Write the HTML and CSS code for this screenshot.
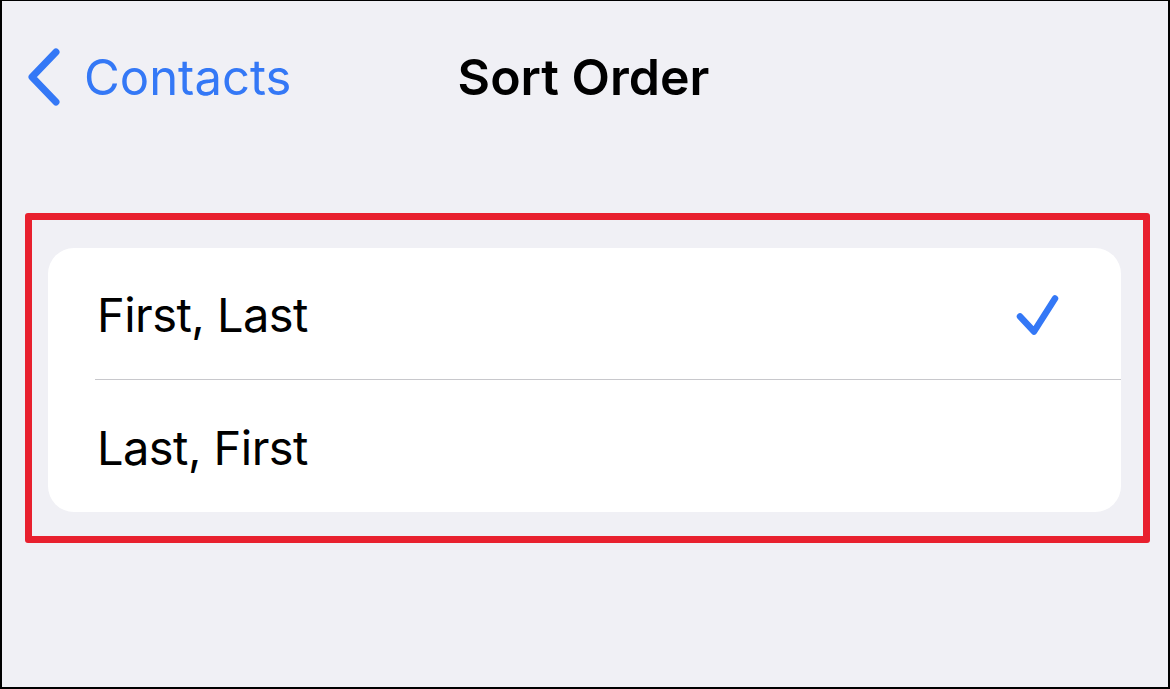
FILE: index.html
```html
<!DOCTYPE html>
<html lang="en">
<head>
  <meta charset="UTF-8">
  <meta name="viewport" content="width=device-width, initial-scale=1.0">
  <title>Sort Order</title>
  <link rel="stylesheet" href="styles.css">
</head>
<body>
  <div class="screen">
    <div class="navbar">
      <a class="back" href="#">
        <svg class="chevron" width="36" height="60" viewBox="0 0 36 60">
          <path d="M30 5 L6 30 L30 55" fill="none" stroke="#3478f6" stroke-width="7" stroke-linecap="round" stroke-linejoin="round"/>
        </svg>
        <span>Contacts</span>
      </a>
      <div class="title">Sort Order</div>
      <div></div>
    </div>

    <div class="highlight">
      <div class="card">
        <div class="row">
          <span class="label">First, Last</span>
          <svg class="check" width="46" height="46" viewBox="0 0 46 46">
            <path d="M5 25.5 L19 40.5 L40 7.5" fill="none" stroke="#3478f6" stroke-width="6.5" stroke-linecap="round" stroke-linejoin="round"/>
          </svg>
        </div>
        <div class="row">
          <span class="label">Last, First</span>
        </div>
      </div>
    </div>
  </div>
</body>
</html>
```

FILE: styles.css
```css
body {
  margin: 0;
  font-family: Inter, "Noto Sans", sans-serif;
  background-color: #f0f0f5;
}
.screen {
  box-sizing: border-box;
  width: 1170px;
  height: 689px;
  border: 2px solid #000;
  border-top-width: 1px;
  background-color: #f0f0f5;
  padding: 0 18px 0 23px;
}
.navbar {
  display: grid;
  grid-template-columns: 1fr auto 1fr;
  align-items: center;
  height: 154px;
}
.back {
  display: flex;
  align-items: center;
  gap: 22px;
  color: #3478f6;
  text-decoration: none;
  font-size: 49px;
  margin-left: 1px;
  padding-bottom: 2px;
}
.chevron {
  display: block;
}
.title {
  font-size: 50px;
  font-weight: 600;
  color: #000;
  padding-bottom: 2px;
  margin-left: -8px;
}
.highlight {
  margin-top: 58px;
  border: 7px solid #e8202e;
  border-radius: 3px;
  padding: 28px 22px 24px 16px;
}
.card {
  background-color: #fff;
  border-radius: 26px;
  overflow: hidden;
}
.row {
  display: flex;
  align-items: center;
  justify-content: space-between;
  height: 131px;
  margin-left: 47px;
  padding-right: 60px;
  font-size: 47px;
  letter-spacing: -0.55px;
  color: #000;
}
.row + .row {
  border-top: 1px solid #c8c8cc;
  height: 132px;
}
.label {
  margin-left: 2px;
  padding-top: 2px;
}
.check {
  display: block;
}
```
